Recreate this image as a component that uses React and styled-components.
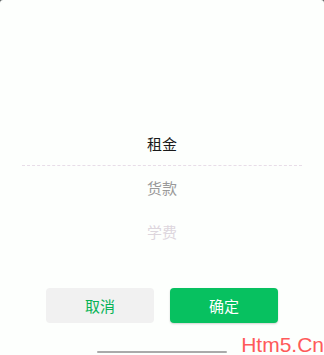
import React from "react";
import styled, { createGlobalStyle } from "styled-components";

const GlobalStyle = createGlobalStyle`
  html, body {
    margin: 0;
    padding: 0;
    background: #5a6060;
  }
  body {
    font-family: "Noto Sans CJK SC", "Noto Sans", sans-serif;
  }
`;

const Sheet = styled.div`
  position: relative;
  width: 324px;
  height: 355px;
  background: #fdfffd;
  border-radius: 3px 3px 0 0;
  overflow: hidden;
  display: flex;
  flex-direction: column;
  padding-top: 122px;
  box-sizing: border-box;
`;

const Picker = styled.div`
  display: flex;
  flex-direction: column;
`;

const Option = styled.div`
  height: 44px;
  line-height: 44px;
  text-align: center;
  font-size: 15px;
  color: ${(p) => p.$color};
`;

const Divider = styled.div`
  margin: -1px 22px 0;
  height: 0;
  border-top: 1px dashed #e8dde8;
`;

const Actions = styled.div`
  display: flex;
  justify-content: center;
  gap: 16px;
  margin-top: 34px;
`;

const Button = styled.button`
  width: 108px;
  height: 35px;
  border: none;
  border-radius: 4px;
  font-family: inherit;
  font-size: 15px;
  padding: 0;
  background: ${(p) => (p.$primary ? "#07c160" : "#f1f1f1")};
  color: ${(p) => (p.$primary ? "#ffffff" : "#07b356")};
  box-shadow: ${(p) => (p.$primary ? "0 1px 2px rgba(0,0,0,0.18)" : "none")};
`;

const HomeBar = styled.div`
  width: 130px;
  height: 2px;
  background: #aaaaaa;
  border-radius: 1px;
  margin: 28px auto 0;
`;

const Watermark = styled.div`
  position: absolute;
  right: 0;
  bottom: 0;
  font-family: "Liberation Sans", Arial, sans-serif;
  font-size: 21px;
  line-height: 21px;
  color: #ff5a5a;
`;

export default function App() {
  return (
    <>
      <GlobalStyle />
      <Sheet>
        <Picker>
          <Option $color="#1a1a1a">租金</Option>
          <Divider />
          <Option $color="#9a9a9a">货款</Option>
          <Option $color="#ddd6dd">学费</Option>
        </Picker>
        <Actions>
          <Button>取消</Button>
          <Button $primary>确定</Button>
        </Actions>
        <HomeBar />
        <Watermark>Htm5.Cn</Watermark>
      </Sheet>
    </>
  );
}
